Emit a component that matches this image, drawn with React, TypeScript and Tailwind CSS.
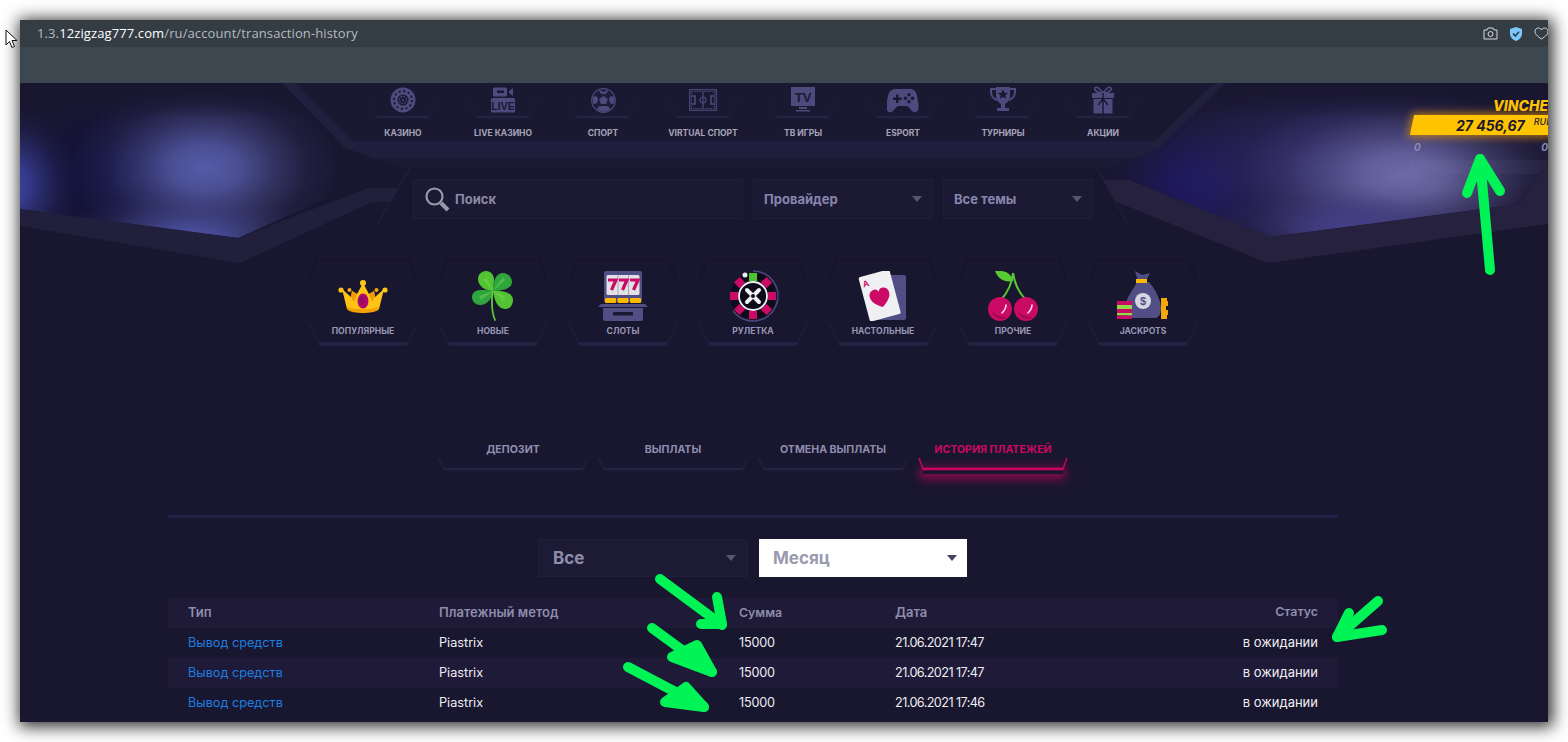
import React from "react";

const ICON = "#4d4a7e";
const DARK = "#1b1832";

function Tri({ color = "#57556f" }: { color?: string }) {
  return (
    <svg width="10" height="6" viewBox="0 0 10 6" className="shrink-0">
      <path d="M0 0h10L5 6z" fill={color} />
    </svg>
  );
}

function RouletteNav() {
  return (
    <svg width="26" height="26" viewBox="0 0 26 26">
      <circle cx="13" cy="13" r="12.500" fill={ICON} />
      <circle cx="13" cy="13" r="9" fill="none" stroke={DARK} strokeWidth="1.800" strokeDasharray="2.200 2.500" />
      <circle cx="13" cy="13" r="5.500" fill={DARK} />
      <circle cx="13" cy="13" r="3.600" fill="none" stroke={ICON} strokeWidth="1.400" strokeDasharray="1.600 1.200" />
      <circle cx="13" cy="13" r="1" fill={ICON} />
    </svg>
  );
}
function LiveNav() {
  return (
    <svg width="26" height="26" viewBox="0 0 26 26">
      <rect x="3" y="0.500" width="14" height="9" rx="1.500" fill={ICON} />
      <rect x="7" y="3.500" width="7" height="2.500" fill={DARK} />
      <path d="M19 4l4-3v8l-4-3z" fill={ICON} />
      <rect x="1" y="11" width="24" height="14.500" rx="1.500" fill={ICON} />
      <text x="13" y="23" textAnchor="middle" fontSize="10.500" fontWeight="800" fill={DARK} fontFamily="Liberation Sans, sans-serif">LIVE</text>
    </svg>
  );
}
function BallNav() {
  return (
    <svg width="25" height="25" viewBox="0 0 25 25">
      <circle cx="12.500" cy="12.500" r="11.800" fill="#1f1c3a" stroke={ICON} strokeWidth="1.200" />
      <path d="M12.500 8l4.300 3.100-1.600 5H9.800l-1.600-5z" fill={ICON} />
      <path d="M8 1.600l4.500 2.400L17 1.600l-1 3.400-3.500 1.500L9 5zM1.500 9l3.700-1 2 3-1.500 4.500-3.500.5zM23.500 9l-3.700-1-2 3 1.500 4.500 3.500.5zM6 22l1-3.300 3.500-.7h4l3.500.7L19 22l-6.500 2z" fill={ICON} />
    </svg>
  );
}
function FieldNav() {
  return (
    <svg width="28" height="22" viewBox="0 0 28 22" fill="none" stroke={ICON} strokeWidth="1.200">
      <rect x="0.700" y="0.700" width="26.600" height="20.600" />
      <rect x="2.500" y="2.500" width="23" height="17" strokeDasharray="1.500 1" />
      <path d="M14 2.500v17" />
      <circle cx="14" cy="11" r="3" />
      <path d="M2.500 7h3.500v8H2.500M25.500 7H22v8h3.500" strokeWidth="1.600" />
    </svg>
  );
}
function TvNav() {
  return (
    <svg width="26" height="26" viewBox="0 0 26 26">
      <rect x="1" y="0" width="24" height="19" fill={ICON} />
      <text x="13" y="15" textAnchor="middle" fontSize="13" fontWeight="800" fill={DARK} fontFamily="Liberation Sans, sans-serif">TV</text>
      <path d="M9 20h8v2H9zM6 23h14v1.500H6z" fill={ICON} />
    </svg>
  );
}
function PadNav() {
  return (
    <svg width="32" height="25" viewBox="0 0 32 25">
      <path d="M9 1h14c4 0 6 2 7 7 1.500 7 2.300 12 .5 15-1.500 2.300-4.500 1.500-6.500-1-1.500-2-3-4-5-4h-7c-2 0-3.500 2-5 4-2 2.500-5 3.300-6.500 1-1.800-3-1-8 .5-15C2 3 5 1 9 1z" fill={ICON} />
      <path d="M9 6.500h2.400v3H14.500v2.400h-3.100v3H9v-3H6v-2.400h3z" fill={DARK} />
      <circle cx="22" cy="6.800" r="1.700" fill={DARK} />
      <circle cx="25.500" cy="10.300" r="1.700" fill={DARK} />
      <circle cx="18.500" cy="10.300" r="1.700" fill={DARK} />
      <circle cx="22" cy="13.800" r="1.700" fill={DARK} />
    </svg>
  );
}
function TrophyNav() {
  return (
    <svg width="26" height="28" viewBox="0 0 26 28">
      <path d="M6 1h14v9c0 4-3 7-5 8v4h4v3H7v-3h4v-4c-2-1-5-4-5-8z" fill={ICON} />
      <path d="M6 3H1v3c0 4 3 7 6 8M20 3h5v3c0 4-3 7-6 8" fill="none" stroke={ICON} strokeWidth="2" />
      <path d="M13 3.500l1.500 3.200 3.400.4-2.500 2.300.7 3.400-3.100-1.700-3.100 1.700.7-3.400-2.500-2.300 3.400-.4z" fill={DARK} />
    </svg>
  );
}
function GiftNav() {
  return (
    <svg width="24" height="28" viewBox="0 0 24 28">
      <path d="M12 7C9 2 5 0 4 2s2 5 8 5c6 0 9-3 8-5s-5 0-8 5z" fill="none" stroke={ICON} strokeWidth="1.600" />
      <rect x="1" y="7" width="22" height="5" fill={ICON} />
      <rect x="2.500" y="13" width="19" height="14.500" fill={ICON} />
      <path d="M12 7v21M12 13l-5 6M12 13l5 6" stroke={DARK} strokeWidth="1.400" fill="none" />
    </svg>
  );
}

const navItems: [string, React.ReactNode][] = [
  ["КАЗИНО", <RouletteNav />],
  ["LIVE КАЗИНО", <LiveNav />],
  ["СПОРТ", <BallNav />],
  ["VIRTUAL СПОРТ", <FieldNav />],
  ["ТВ ИГРЫ", <TvNav />],
  ["ESPORT", <PadNav />],
  ["ТУРНИРЫ", <TrophyNav />],
  ["АКЦИИ", <GiftNav />],
];

function Crown() {
  return (
    <svg width="50" height="36" viewBox="0 0 50 36">
      <path d="M4 11l9 8 1-6 5 3 6-11 6 11 5-3 1 6 9-8-5 20c-4 4-28 4-32 0z" fill="#ffc414" />
      <path d="M9 29c8 3 24 3 32 0l-1 3c-4 4-26 4-30 0z" fill="#f2a100" />
      <path d="M13 19l1-6 5 3-3 8zM37 19l-1-6-5 3 3 8z" fill="#f09a06" />
      <circle cx="25" cy="5" r="3" fill="#ffc414" />
      <circle cx="3" cy="12" r="2.600" fill="#ffc414" />
      <circle cx="47" cy="12" r="2.600" fill="#ffc414" />
      <circle cx="11.500" cy="12" r="2" fill="#f6a90a" />
      <circle cx="38.500" cy="12" r="2" fill="#f6a90a" />
      <ellipse cx="25" cy="23" rx="5.500" ry="7.500" fill="#b0086f" />
      <ellipse cx="24" cy="22.500" rx="2.500" ry="4.200" fill="#8f0d63" />
    </svg>
  );
}
function Clover() {
  return (
    <svg width="42" height="50" viewBox="0 0 42 50">
      <path d="M21 20C13 20 6 15 6 8c0-5 4-8 8-8 5 0 8 4 8 9z" fill="#52c433" />
      <path d="M21 20C21 10 24 2 31 2c5 0 9 4 9 9 0 6-8 9-19 9z" fill="#2fa53d" />
      <path d="M21 20C10 18 0 18 0 26c0 5 4 8 8 8 7 0 12-6 13-14z" fill="#2fa53d" />
      <path d="M21 20c1 9 5 18 12 18 5 0 8-4 8-9 0-6-8-10-20-9z" fill="#52c433" />
      <path d="M21 20L11 9l4-2zM21 20l12-11-2-3zM21 20L7 25l2 4zM21 20l12 5-1 5z" fill="#7ad958" opacity="0.45" />
      <path d="M20.500 20c-1 10-1 21 2.500 29" fill="none" stroke="#5cc934" strokeWidth="1.800" strokeLinecap="round" />
    </svg>
  );
}
function Slots() {
  return (
    <svg width="52" height="50" viewBox="0 0 52 50">
      <path d="M7 2a2 2 0 0 1 2-2h34a2 2 0 0 1 2 2v29H7z" fill="#514e85" />
      <rect x="9.500" y="4" width="33" height="20" rx="1.500" fill="#e3e1e8" />
      <path d="M20.500 4h1v20h-1zM31 4h1v20h-1z" fill="#a9a7b3" />
      <g fill="none" stroke="#cb0a66" strokeWidth="3.200">
        <path d="M11 9h8l-4.500 10" />
        <path d="M22 9h8l-4.500 10" />
        <path d="M33 9h8l-4.500 10" />
      </g>
      <rect x="8" y="27" width="11" height="5" rx="1" fill="#ffb800" />
      <rect x="20.500" y="27" width="11" height="5" rx="1" fill="#ffb800" />
      <rect x="33" y="27" width="11" height="5" rx="1" fill="#ffb800" />
      <path d="M4 33h44l3 3H1z" fill="#514e85" />
      <path d="M6 37h40v11a2 2 0 0 1-2 2H8a2 2 0 0 1-2-2z" fill="#514e85" />
      <rect x="16" y="41" width="20" height="3.500" fill={DARK} />
    </svg>
  );
}
function Roulette() {
  const segs = [0, 45, 90, 135, 180, 225, 270, 315];
  return (
    <svg width="54" height="52" viewBox="-27 -26 54 52">
      <path d="M0-25A25 25 0 1 1-20 15" fill="none" stroke="#4d4a7e" strokeWidth="1.500" />
      <circle r="23" fill="#0d0b1a" />
      {segs.map((a, i) => (
        <rect key={a} x="-4" y="-23" width="8" height="8" fill={i === 0 ? "#4fc22f" : "#cb0a66"} transform={`rotate(${a})`} />
      ))}
      <circle cx="-8" cy="-21" r="2.500" fill="#eeeef2" />
      <circle r="14" fill="#0d0b1a" stroke="#f1f1f4" strokeWidth="1.800" />
      <path d="M-6-6L6 6M6-6L-6 6" stroke="#f1f1f4" strokeWidth="4" strokeLinecap="round" />
      <circle r="2" fill="#0d0b1a" />
    </svg>
  );
}
function Card() {
  return (
    <svg width="50" height="50" viewBox="0 0 50 50">
      <rect x="18" y="4" width="30" height="45" rx="2" fill="#514e85" />
      <g transform="rotate(-15 20 26)">
        <rect x="6" y="2" width="32" height="46" rx="2" fill="#f0eff3" />
        <text x="8.500" y="13" fontSize="9" fontWeight="700" fill="#cb0a66" fontFamily="Liberation Sans, sans-serif">A</text>
        <path d="M22 37c-6-4-10-8-10-13 0-4 3-6 6-6 2 0 3 1 4 3 1-2 2-3 4-3 3 0 6 2 6 6 0 5-4 9-10 13z" fill="#cb0a66" />
      </g>
    </svg>
  );
}
function Cherry() {
  return (
    <svg width="52" height="50" viewBox="0 0 52 50">
      <path d="M8 0c8-1 16 1 18 10-8 2-15-2-18-10z" fill="#57c932" />
      <path d="M26 2c-1 12-6 20-12 27M26 2c2 12 7 21 13 27" fill="none" stroke="#57c932" strokeWidth="2" />
      <circle cx="13" cy="38" r="12" fill="#cb0a66" />
      <circle cx="39" cy="38" r="12" fill="#cb0a66" />
      <path d="M5 41c2 6 10 9 15 5-7 0-11-2-15-5zM31 41c2 6 10 9 15 5-7 0-11-2-15-5z" fill="#a00855" />
      <path d="M19 34c0 4-2 6-4 8M45 34c0 4-2 6-4 8" fill="none" stroke="#f7d9e7" strokeWidth="1.600" strokeLinecap="round" />
    </svg>
  );
}
function Bag() {
  return (
    <svg width="52" height="50" viewBox="0 0 52 50">
      <path d="M18 0l7 4 8-2-4 8h-8z" fill="#514e85" />
      <path d="M20 11c-3 7-12 16-12 27 0 7 5 9 10 9h20c5 0 6-5 6-10 0-10-7-20-12-26z" fill="#514e85" />
      <path d="M38 47c5 0 6-5 6-10 0-6-2-11-5-16 6 7 8 12 8 18 0 5-2 8-5 8z" fill="#0d0b1a" />
      <rect x="19" y="8" width="11" height="4" fill="#ffb800" />
      <circle cx="26" cy="30" r="8" fill="#d6d5e0" />
      <text x="26" y="34" textAnchor="middle" fontSize="11" fontWeight="700" fill="#514e85" fontFamily="Liberation Sans, sans-serif">$</text>
      <path d="M44 27h6v3h1v5h-2v4h2v5h-1v4h-6z" fill="#f5a70a" />
      <rect x="0" y="30" width="15" height="4" fill="#cb0a66" />
      <rect x="0" y="34" width="15" height="4" fill="#8fd94a" />
      <rect x="0" y="38" width="15" height="4" fill="#cb0a66" />
      <rect x="0" y="42" width="15" height="2.500" fill="#8fd94a" />
      <rect x="0" y="44.500" width="15" height="3.500" fill="#cb0a66" />
    </svg>
  );
}

const cats: [string, React.ReactNode][] = [
  ["ПОПУЛЯРНЫЕ", <Crown />],
  ["НОВЫЕ", <Clover />],
  ["СЛОТЫ", <Slots />],
  ["РУЛЕТКА", <Roulette />],
  ["НАСТОЛЬНЫЕ", <Card />],
  ["ПРОЧИЕ", <Cherry />],
  ["JACKPOTS", <Bag />],
];

function CatTile({ label, icon }: { label: string; icon: React.ReactNode }) {
  return (
    <div className="relative w-[110px] h-[88px] flex flex-col items-center">
      <svg className="absolute inset-0" width="110" height="88" viewBox="0 0 110 88" fill="none">
        <path d="M1 23L9 1h92l8 22" stroke="#161329" strokeWidth="1.500" />
        <path d="M1 65l10 20h88l10-20" stroke="#211d3d" strokeWidth="1.500" />
        <path d="M11 85h88" stroke="#272348" strokeWidth="3" />
      </svg>
      <div className="h-[50px] mt-[12px] flex items-center justify-center">{icon}</div>
      <div className="mt-[4px] text-[8.6px] leading-[12px] font-bold text-[#9896b5]">{label}</div>
    </div>
  );
}

function Tab({ label, active }: { label: string; active?: boolean }) {
  return (
    <div className="relative w-[150px] h-[31px] flex justify-center pt-[3px]">
      <span className={`text-[10.6px] leading-[14px] font-bold ${active ? "text-[#c9095f]" : "text-[#8f8dad]"}`}>{label}</span>
      <svg className="absolute left-0 bottom-0 overflow-visible" width="150" height="14" viewBox="0 0 150 14" fill="none">
        <path d="M1 1l4 11h140l4-11" stroke={active ? "#c9045f" : "#262244"} strokeWidth={active ? 1.500 : 1} />
        <path d="M5 12h140" stroke={active ? "#d0045f" : "#262244"} strokeWidth="2.500" />
      </svg>
      {active && <div className="absolute left-[5px] right-[5px] bottom-[-3px] h-[5px] shadow-[0_2px_10px_3px_rgba(208,4,95,0.65)]" />}
    </div>
  );
}

const glows: [string, string, number, number, number, number][] = [
  ["g1", "#12123c", 110, 175, 140, 95],
  ["g2", "#1b1560", 1195, 185, 95, 75],
  ["g3", "#2c2760", 1320, 165, 220, 110],
  ["g4", "#3d44a6", 8, 185, 70, 80],
  ["g5", "#565ba8", 205, 168, 135, 90],
  ["g6", "#4d52a2", 190, 240, 135, 48],
  ["g7", "#6d6aa8", 1405, 175, 165, 85],
  ["g8", "#454088", 1350, 228, 140, 45],
];

function HeaderArt() {
  return (
    <svg className="absolute left-0 top-0" width="1528" height="220" viewBox="20 83 1528 220">
      <defs>
        {glows.map(([id, c]) => (
          <radialGradient key={id} id={id}>
            <stop offset="0" stopColor={c} stopOpacity="1" />
            <stop offset="0.25" stopColor={c} stopOpacity="0.82" />
            <stop offset="0.5" stopColor={c} stopOpacity="0.44" />
            <stop offset="0.75" stopColor={c} stopOpacity="0.13" />
            <stop offset="1" stopColor={c} stopOpacity="0" />
          </radialGradient>
        ))}
        <linearGradient id="fade" x1="0" y1="0" x2="0" y2="1">
          <stop offset="0" stopColor="#191630" stopOpacity="1" />
          <stop offset="1" stopColor="#191630" stopOpacity="0" />
        </linearGradient>
        <clipPath id="sky"><path d="M20 83H1548V160L1520 204L1270 237L1130 180H368L238 238L20 209z" /></clipPath>
      </defs>
      <rect x="20" y="83" width="1528" height="220" fill="#191630" />
      <g clipPath="url(#sky)">
        {glows.map(([id, , cx, cy, rx, ry]) => (
          <ellipse key={id} cx={cx} cy={cy} rx={rx} ry={ry} fill={`url(#${id})`} />
        ))}
        <rect x="1410" y="160" width="138" height="14" fill="#8a87b8" opacity="0.07" />
        <rect x="20" y="83" width="1528" height="35" fill="url(#fade)" />
      </g>
      <path d="M20 209L238 238L368 188H410V202H372L240 263L20 226z" fill="#221f3c" />
      <path d="M1548 160L1520 204L1270 237L1130 180H1097V194L1268 263L1548 224z" fill="#25213f" />
      <path d="M282 83L348 147H1157L1226 83z" fill="#1b1832" />
      <path d="M282 83L345 148H1160L1226 83L1214 83L1155 141H354L296 83z" fill="#221e3e" />
      <path d="M345 148H1160L1135 158H372z" fill="#211d3c" />
      <path d="M372 158H1135L1110 168L400 168z" fill="#1c1935" />
      <path d="M410 168H1097L1127 223H378z" fill="#191630" />
      <path d="M410 168L378 223M1097 168L1127 223" stroke="#262240" strokeWidth="1" fill="none" />
    </svg>
  );
}

function Arrows() {
  return (
    <svg className="absolute left-0 top-0 pointer-events-none" width="1568" height="742" viewBox="0 0 1568 742" fill="none" stroke="#00f455" strokeLinecap="round" strokeLinejoin="round">
      <g strokeWidth="10">
        <path d="M1490 270L1480 159" />
        <path d="M1467 193L1480 159L1500 191" />
      </g>
      <g strokeWidth="10">
        <path d="M660 579L722 625" />
        <path d="M717 597L722 624L701 624" />
      </g>
      <g strokeWidth="10">
        <path d="M652 628L712 672" />
        <path d="M697 645L712 672L672 657z" fill="#00f455" />
      </g>
      <g strokeWidth="10">
        <path d="M628 667L704 707" />
        <path d="M686 687L704 707L665 702z" fill="#00f455" />
      </g>
      <g strokeWidth="10">
        <path d="M1378 601L1337 637" />
        <path d="M1349 613L1337 637L1382 630" />
      </g>
    </svg>
  );
}

function Cursor() {
  return (
    <svg className="absolute left-[5px] top-[29px]" width="14" height="20" viewBox="0 0 14 20">
      <path d="M1 1v15l3.500-3.500 2.500 6 2.500-1-2.500-6H12z" fill="#fff" stroke="#111" strokeWidth="1" />
    </svg>
  );
}

const rows = [
  ["Вывод средств", "Piastrix", "15000", "21.06.2021 17:47", "в ожидании"],
  ["Вывод средств", "Piastrix", "15000", "21.06.2021 17:47", "в ожидании"],
  ["Вывод средств", "Piastrix", "15000", "21.06.2021 17:46", "в ожидании"],
];

const tableCols = "grid grid-cols-[251px_300px_156px_1fr] items-center h-[30px] px-[20px]";

export default function App() {
  return (
    <div className="relative w-[1568px] h-[742px] bg-white overflow-hidden pl-[20px] pt-[20px]" style={{ fontFamily: "Inter, 'Noto Sans', sans-serif" }}>
      <div className="relative w-[1528px] h-[702px] overflow-hidden shadow-[2px_2px_15px_3px_rgba(0,0,0,0.8)] flex flex-col bg-[#191630]">
        <div className="h-[27px] bg-[#343c44] flex items-center justify-between pl-[17px] shrink-0">
          <div className="text-[13px] text-[#b4bbc1] tracking-[0.11px]" style={{ fontFamily: "'Open Sans', sans-serif" }}>
            1.3.<span className="text-white">12zigzag777.com</span>/ru/account/transaction-history
          </div>
          <div className="flex items-center gap-[11px] w-[65px] overflow-hidden">
            <svg width="15" height="13" viewBox="0 0 15 13" fill="none" stroke="#d6dade" strokeWidth="1" className="shrink-0">
              <path d="M1 3h3l1-2h5l1 2h3v9H1z" /><circle cx="7.500" cy="7" r="2.500" />
            </svg>
            <svg width="14" height="14" viewBox="0 0 14 14" className="shrink-0">
              <path d="M7 0l6 2v5c0 3-3 6-6 7-3-1-6-4-6-7V2z" fill="#7cc8f8" />
              <path d="M4 6.500L6.300 9 10 4.800" fill="none" stroke="#2b3c52" strokeWidth="1.600" />
            </svg>
            <svg width="15" height="13" viewBox="0 0 15 13" fill="none" stroke="#d6dade" strokeWidth="1" className="shrink-0">
              <path d="M7.500 12C3 9 1 7 1 4.300 1 2 3 1 4.300 1c1.300 0 2.500.7 3.200 2C8.200 1.700 9.400 1 10.700 1 12 1 14 2 14 4.300 14 7 12 9 7.500 12z" />
            </svg>
          </div>
        </div>
        <div className="h-[36px] bg-[#3c4750] shrink-0" />
        <div className="relative flex-1 flex overflow-hidden">
          <HeaderArt />
          <main className="relative ml-[148px] w-[1170px] shrink-0 flex flex-col">
            <nav className="flex justify-center h-[96px]">
              {navItems.map(([label, icon]) => (
                <div key={label} className="relative w-[100px] flex flex-col items-center">
                  <svg className="absolute left-[15px] top-[14px]" width="70" height="22" viewBox="0 0 70 22" fill="none">
                    <path d="M0 1l9 19h52l9-19" stroke="#211d3d" strokeWidth="1" />
                    <path d="M9 20h52" stroke="#262244" strokeWidth="2.500" />
                  </svg>
                  <div className="relative h-[28px] mt-[3px] flex items-center justify-center">{icon}</div>
                  <div className="mt-[13px] text-[8.5px] leading-[12px] font-bold text-[#a5a4b8] whitespace-nowrap">{label}</div>
                </div>
              ))}
            </nav>
            <div className="flex justify-center gap-[10px] h-[40px]">
              <div className="w-[330px] bg-[#1c1934] border border-[#211e3a] flex items-center pl-[10px]">
                <svg width="26" height="26" viewBox="0 0 26 26" fill="none" className="shrink-0">
                  <circle cx="10.500" cy="10.500" r="8" stroke="#9a99a8" strokeWidth="2.200" />
                  <path d="M17 17l7 7" stroke="#9a99a8" strokeWidth="4" />
                </svg>
                <span className="ml-[5px] pt-[2px] text-[13px] font-bold text-[#8b8aa3]">Поиск</span>
              </div>
              <div className="w-[180px] bg-[#1c1934] border border-[#211e3a] flex items-center justify-between px-[10px]">
                <span className="pt-[2px] text-[13px] font-bold text-[#8886ad]">Провайдер</span>
                <Tri />
              </div>
              <div className="w-[150px] bg-[#1c1934] border border-[#211e3a] flex items-center justify-between px-[10px]">
                <span className="pt-[2px] text-[13px] font-bold text-[#8886ad]">Все темы</span>
                <Tri />
              </div>
            </div>
            <div className="flex justify-center gap-[20px] mt-[40px]">
              {cats.map(([label, icon]) => (
                <CatTile key={label} label={label} icon={icon} />
              ))}
            </div>
            <div className="flex gap-[10px] ml-[270px] mt-[93px]">
              <Tab label="ДЕПОЗИТ" />
              <Tab label="ВЫПЛАТЫ" />
              <Tab label="ОТМЕНА ВЫПЛАТЫ" />
              <Tab label="ИСТОРИЯ ПЛАТЕЖЕЙ" active />
            </div>
            <div className="h-[3px] bg-[#252146] mt-[44px]" />
            <div className="flex justify-center gap-[11px] mt-[21px] h-[38px] pr-[1px]">
              <div className="w-[210px] bg-[#1d1a36] border border-[#221f3c] flex items-center justify-between pl-[14px] pr-[11px]">
                <span className="pt-[2px] text-[17px] font-bold text-[#8f8dab]">Все</span>
                <Tri />
              </div>
              <div className="w-[208px] bg-white flex items-center justify-between pl-[14px] pr-[10px]">
                <span className="pt-[2px] text-[17px] font-bold text-[#9a99b0]">Месяц</span>
                <Tri color="#45435f" />
              </div>
            </div>
            <div className="mt-[21px]">
              <div className={`${tableCols} bg-[#1e1a38] font-semibold text-[#8f8dab] text-[13px]`}>
                <div>Тип</div>
                <div>Платежный метод</div>
                <div className="text-[12.3px]">Сумма</div>
                <div className="flex justify-between"><span>Дата</span><span className="text-[12.4px]">Статус</span></div>
              </div>
              {rows.map((r, i) => (
                <div key={i} className={`${tableCols} ${i === 1 ? "bg-[#1e1a38]" : "bg-[#191630]"} text-[#eeeef2] text-[12.7px]`}>
                  <div className="text-[#1d7fe0]">{r[0]}</div>
                  <div>{r[1]}</div>
                  <div className="tracking-[-0.2px]">{r[2]}</div>
                  <div className="flex justify-between"><span className="tracking-[-0.6px]">{r[3]}</span><span className="text-[13px]">{r[4]}</span></div>
                </div>
              ))}
            </div>
          </main>
          <aside className="relative flex-1 min-w-0 pl-[74px] pt-[15px] overflow-hidden">
            <div className="w-[160px] flex flex-col">
              <div className="text-[14px] leading-[16px] font-extrabold italic text-[#ffc400] pl-[81px] whitespace-nowrap">VINCHE</div>
              <div
                className="h-[20px] mt-[1px] bg-[#ffc400] shadow-[0_0_8px_2px_rgba(255,160,0,0.65)] flex items-center pl-[44px] text-[#1a1730]"
                style={{ transform: "skewX(-12deg)" }}
              >
                <span className="text-[14px] font-bold italic whitespace-nowrap" style={{ transform: "skewX(12deg)" }}>27 456,67</span>
                <span className="text-[9px] font-medium italic ml-[8px] mb-[6px]" style={{ transform: "skewX(12deg)" }}>RUB</span>
              </div>
              <div className="flex justify-between w-[136px] text-[10px] italic font-bold text-[#8a88b8] mt-[5px] pl-[2px]">
                <span>0</span><span>0</span>
              </div>
            </div>
          </aside>
        </div>
      </div>
      <Arrows />
      <Cursor />
    </div>
  );
}
